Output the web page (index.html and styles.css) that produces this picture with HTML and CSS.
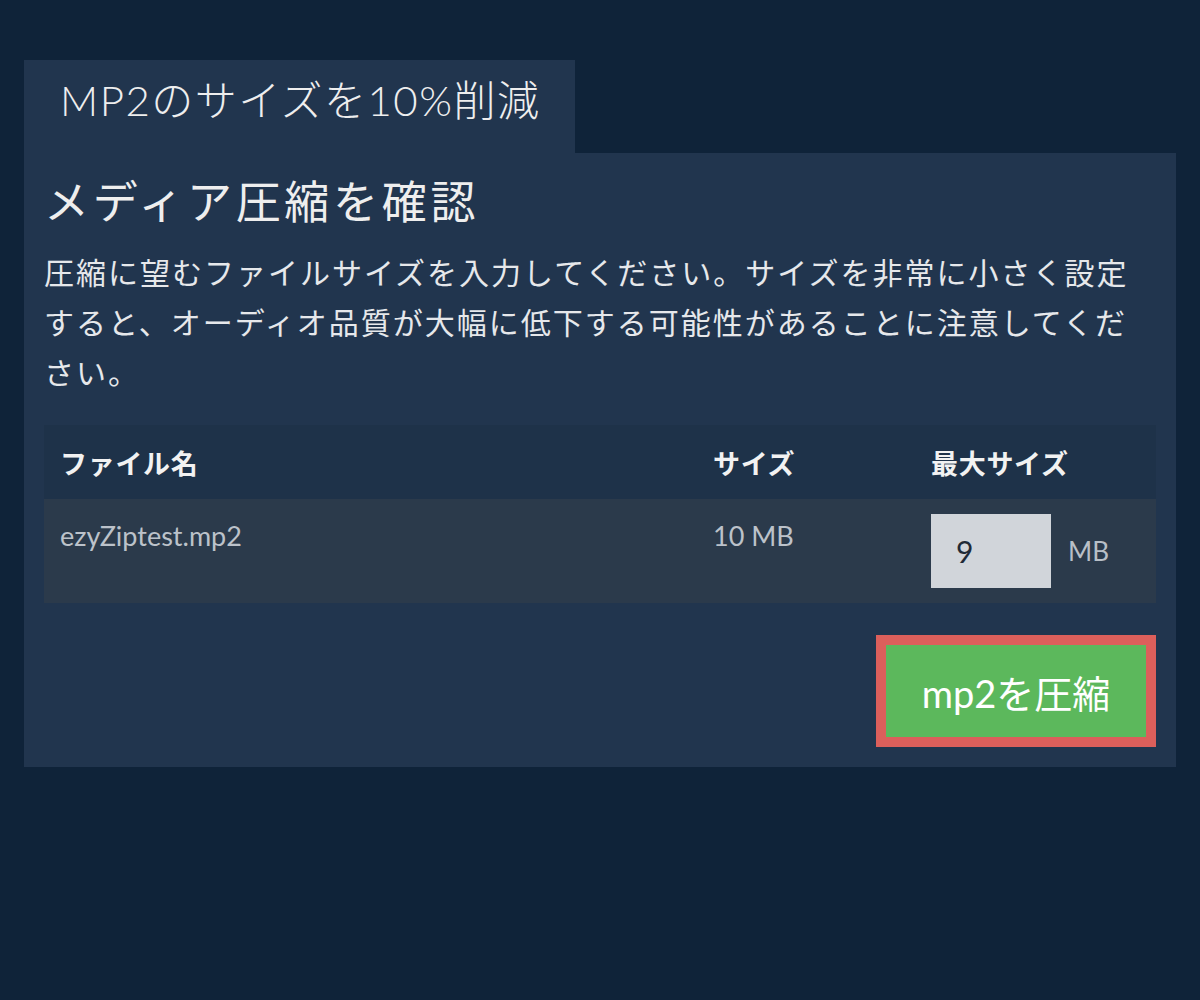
FILE: index.html
```html
<!DOCTYPE html>
<html lang="ja">

<head>
    <meta charset="UTF-8">
    <meta name="viewport" content="width=device-width, initial-scale=1.0">
    <title>MP2のサイズを10%削減</title>
    <link rel="stylesheet" href="styles.css">
</head>

<body>

    <div id="container">
        <div class="aba">MP2のサイズを10%削減</div>
        <div class="painel">
            <h2 class="titulo">メディア圧縮を確認</h2>
            <p class="texto">圧縮に望むファイルサイズを入力してください。サイズを非常に小さく設定すると、オーディオ品質が大幅に低下する可能性があることに注意してください。</p>

            <table class="tabela">
                <thead>
                    <tr>
                        <th class="colNome">ファイル名</th>
                        <th class="colTamanho">サイズ</th>
                        <th class="colMax">最大サイズ</th>
                    </tr>
                </thead>
                <tbody>
                    <tr>
                        <td class="valor">ezyZiptest.mp2</td>
                        <td class="valor">10 MB</td>
                        <td>
                            <div class="campoMax">
                                <input type="text" class="inputMax" value="9">
                                <span class="unidade">MB</span>
                            </div>
                        </td>
                    </tr>
                </tbody>
            </table>

            <div class="acoes">
                <button class="botao">mp2を圧縮</button>
            </div>
        </div>
    </div>

</body>

</html>
```

FILE: styles.css
```css
* {
    margin: 0;
    padding: 0;
    outline: none;
    box-sizing: border-box;
}

html,
body {
    width: 100%;
    height: 100%;
}

body {
    background-color: #0f2339;
    font-family: Lato, "Noto Sans CJK JP", sans-serif;
    color: #eceef0;
}

#container {
    padding: 60px 24px 0 24px;
}

.aba {
    display: inline-block;
    width: 551px;
    height: 93px;
    padding: 12px 0 0 36px;
    background-color: #21354e;
    font-size: 42px;
    font-weight: 300;
    letter-spacing: 1.5px;
    line-height: 56px;
    color: #eeeeee;
}

.painel {
    background-color: #21354e;
    padding: 20px;
}

.titulo {
    font-family: "Noto Sans CJK JP", sans-serif;
    font-size: 45px;
    font-weight: normal;
    letter-spacing: 3.7px;
    line-height: 54px;
    margin-bottom: 19px;
    color: #eeeeee;
}

.texto {
    font-family: "Noto Sans CJK JP", sans-serif;
    font-size: 30px;
    letter-spacing: 2px;
    line-height: 50px;
    color: #e6e8eb;
    margin-bottom: 29px;
}

.tabela {
    width: 100%;
    border-collapse: collapse;
    table-layout: fixed;
}

.tabela th {
    height: 74px;
    padding: 0 16px;
    background-color: #1e3249;
    font-family: "Noto Sans CJK JP", sans-serif;
    font-size: 27px;
    font-weight: bold;
    letter-spacing: 0.7px;
    text-align: left;
    vertical-align: middle;
    color: #f2f2f2;
}

.colNome {
    width: 653px;
}

.colTamanho {
    width: 218px;
}

.tabela td {
    padding: 15px 16px;
    background-color: #2b3a4b;
    vertical-align: top;
}

.valor {
    font-size: 27px;
    line-height: 44px;
    color: #bcc2ca;
}

.campoMax {
    display: flex;
    align-items: center;
    gap: 17px;
}

.inputMax {
    width: 120px;
    height: 74px;
    border: none;
    padding-left: 25px;
    background-color: #d1d5da;
    font-family: Lato, sans-serif;
    font-size: 30px;
    color: #1f2a36;
}

.unidade {
    font-size: 26px;
    color: #b8bfc7;
}

.acoes {
    display: flex;
    justify-content: flex-end;
    margin-top: 32px;
}

.botao {
    width: 280px;
    height: 112px;
    border: 10px solid #dc5f5b;
    background-color: #5cb85c;
    font-family: Lato, "Noto Sans CJK JP", sans-serif;
    font-size: 38px;
    color: #ffffff;
    cursor: pointer;
}
```
